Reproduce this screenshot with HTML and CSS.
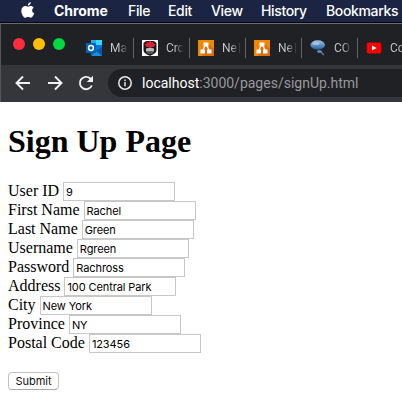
FILE: index.html
```html
<!DOCTYPE html>
<html lang="en">
<head>
<meta charset="utf-8">
<title>Sign Up Page</title>
<link rel="stylesheet" href="styles.css">
</head>
<body>
<nav class="menubar">
  <svg class="apple" viewBox="0 0 14 17"><path d="M9.8 0C10 1.9 8.500 3.600 6.800 3.700 6.600 1.900 8.200.2 9.800 0ZM12.700 5.700C10.500 7.100 10.700 10.200 13.300 11.300 12.600 13.300 11.200 15.700 9.700 15.700 8.700 15.700 8.300 15.100 7.100 15.100 5.900 15.100 5.400 15.700 4.500 15.700 2.600 15.700.3 12 .3 8.900.3 4.700 3.700 3.400 5.400 4.300 6.700 4.900 7.400 4.900 8.600 4.300 10 3.600 11.700 4.200 12.700 5.700Z"/></svg>
  <span class="item app">Chrome</span><span class="item file">File</span><span class="item edit">Edit</span><span class="item view">View</span><span class="item history">History</span><span class="item bookmarks">Bookmarks</span>
</nav>
<div class="tabstrip">
  <div class="lights"><i class="close"></i><i class="minimize"></i><i class="expand"></i></div>
  <div class="tab"><svg viewBox="0 0 16 16"><path fill="#0a68b5" d="M5 0h11v15H5z"/><path fill="#28a8ea" d="M5 0h5v5H5z"/><path fill="#35d6ff" d="M10 0h6v5h-6z"/><path fill="#0078d4" d="M10 5h6v5h-6z"/><path fill="#1490df" d="M5 16 16 7v9z"/><path fill="#0b59a4" d="m10 11 6-4v9z"/><rect y="3" width="10" height="10" rx="1" fill="#0563b8"/><circle cx="5" cy="8" r="2.400" fill="none" stroke="#fff" stroke-width="1.500"/></svg><span>Ma</span></div>
  <div class="tab"><svg viewBox="0 0 16 16"><path fill="#fff" d="M0 0h16v16H0z"/><path fill="#191919" d="M1.500 3 4 1h8l2.500 2v7c0 3-3 4-6.500 6-3.500-2-6.500-3-6.500-6z"/><path fill="#e21f30" d="m8 .5 1.500 2 2-1v2l2 1-2 2.500h-7l-2-2.500 2-1v-2l2 1z"/><path fill="#bbb" d="m4 8.500 4-1 4 1v3H4z"/><path fill="#555" d="M4 12h8l-2 2H6z"/></svg><span>Cro</span></div>
  <div class="tab"><svg viewBox="0 0 16 16"><path fill="#f08705" d="M0 0h16v16H0z"/><path fill="#df6c0c" d="m10 3 6 6v7H5l-2-3z"/><path d="M8 4 4.500 11M8 4l3.500 7" stroke="#fff" stroke-width="1.300"/><path fill="#fff" d="M5.500 2.500h5v4h-5zM2.500 9.500h4.500v4H2.500zM9 9.500h4.500v4H9z"/></svg><span>Ne</span><b></b></div>
  <div class="tab"><svg viewBox="0 0 16 16"><path fill="#f08705" d="M0 0h16v16H0z"/><path fill="#df6c0c" d="m10 3 6 6v7H5l-2-3z"/><path d="M8 4 4.500 11M8 4l3.500 7" stroke="#fff" stroke-width="1.300"/><path fill="#fff" d="M5.500 2.500h5v4h-5zM2.500 9.500h4.500v4H2.500zM9 9.500h4.500v4H9z"/></svg><span>Ne</span><b></b></div>
  <div class="tab"><svg viewBox="0 0 16 16"><defs><linearGradient id="bubble" x2="0" y2="1"><stop stop-color="#9fc6ec"/><stop offset="1" stop-color="#265b9b"/></linearGradient></defs><ellipse cx="7.700" cy="5" rx="7.300" ry="4.700" fill="url(#bubble)"/><ellipse cx="6" cy="3.500" rx="3.500" ry="1.500" fill="#b8d5f1" opacity=".65"/><ellipse cx="9.500" cy="11.500" rx="2.500" ry="1.200" fill="#6497cc"/><path d="m11 12 3 3" stroke="#4c7fb6" stroke-width="1.500"/></svg><span>CO</span></div>
  <div class="tab"><svg viewBox="0 0 16 16"><rect x=".7" y="2.600" width="14.600" height="10.800" rx="2.200" fill="#f00"/><path fill="#fff" d="m6 5.600 4.500 2.400L6 10.400z"/></svg><span>Co</span></div>
</div>
<div class="toolbar">
  <svg class="nav" viewBox="0 0 16 16"><path d="M15 8H2M8 1.500 1.500 8 8 14.500"/></svg>
  <svg class="nav" viewBox="0 0 16 16"><path d="M1 8h13M8 1.500 14.500 8 8 14.500"/></svg>
  <svg class="nav reload" viewBox="0 0 16 16"><path d="M13.800 10.500A6.200 6.200 0 1 1 12.300 3.500L14 5.200"/><path class="tip" d="M15 .8v6.200H8.800z"/></svg>
  <div class="address"><svg class="info" viewBox="0 0 14 14"><circle cx="7" cy="7" r="6.200"/><path d="M7 6v4.300M7 3.400V5"/></svg><span class="url"><em>localhost</em>:3000/pages/signUp.html</span></div>
</div>
<main>
  <h1>Sign Up Page</h1>
  <form>
    <label>User ID <input value="9"></label>
    <label>First Name <input value="Rachel"></label>
    <label>Last Name <input value="Green"></label>
    <label>Username <input value="Rgreen"></label>
    <label>Password <input value="Rachross"></label>
    <label>Address <input value="100 Central Park"></label>
    <label>City <input value="New York"></label>
    <label>Province <input value="NY"></label>
    <label>Postal Code <input value="123456"></label>
    <button type="button">Submit</button>
  </form>
</main>
</body>
</html>
```
FILE: styles.css
```css
* { box-sizing: border-box; }
body { margin: 0; width: 402px; height: 406px; overflow: hidden; background: #fff; color: #000; font-family: Inter, sans-serif; }
svg { display: block; flex: none; }
.menubar { display: flex; align-items: center; height: 23px; padding-left: 21px; background: #1b2443; border-bottom: 1px solid #050507; color: #fff; white-space: nowrap; overflow: hidden; }
.apple { width: 14px; height: 17px; margin: -2px 19px 0 0; fill: #fff; }
.item { flex: none; font-size: 14px; line-height: 22px; letter-spacing: -.35px; font-weight: 500; }
.app { width: 74px; font-weight: 700; letter-spacing: -.05px; }
.file { width: 40px; }
.edit { width: 43px; }
.view { width: 50px; }
.history { width: 65px; }
.tabstrip { display: flex; height: 42px; background: #202124; border-top: 1px solid #6b6c6e; border-left: 1px solid #55565a; overflow: hidden; }
.lights { display: flex; gap: 8px; width: 77px; flex: none; padding: 14px 0 0 12px; }
.lights i { width: 12px; height: 12px; border-radius: 50%; }
.close { background: #ff2d3b; }
.minimize { background: #ffbf00; }
.expand { background: #00da40; }
.tab { display: flex; align-items: center; position: relative; flex: none; width: 56px; height: 20px; margin-top: 14px; padding-left: 8px; border-right: 1px solid #606165; }
.tab svg { width: 16px; height: 16px; margin-right: 8px; }
.tab span { width: 20px; letter-spacing: -.1px; overflow: hidden; white-space: nowrap; font: 12px/18px Roboto, sans-serif; color: transparent; background: linear-gradient(90deg, #c7c8ca 45%, #202124 88%); background-clip: text; -webkit-background-clip: text; }
.tab b { width: 1px; height: 10px; margin-left: -3px; background: #38393c; }
.toolbar { display: flex; align-items: center; height: 37px; padding: 0 0 1px 14px; background: #35363a; border-left: 1px solid #55565a; overflow: hidden; }
.nav { width: 16px; height: 16px; margin-right: 16px; fill: none; stroke: #f0f0f1; stroke-width: 1.900; }
.reload { margin: 0 14px 0 -1px; }
.tip { fill: #f0f0f1; stroke: none; }
.address { display: flex; align-items: center; flex: none; width: 320px; height: 28px; padding-left: 10px; background: #202124; border-radius: 14px 0 0 14px; }
.info { width: 14px; height: 14px; margin-right: 10px; fill: none; stroke: #e8e8e9; stroke-width: 1.500; }
.url { font: 14px/20px Roboto, sans-serif; color: #98999c; white-space: nowrap; }
.url em { font-style: normal; color: #fff; }
main { padding: 0 8px; }
h1 { margin: 21px 0 22px; font: bold 32px/37px "Liberation Serif", serif; }
form { display: flex; flex-direction: column; align-items: flex-start; }
label { display: flex; align-items: flex-start; gap: 4px; height: 19px; font: 16px/17px "Liberation Serif", serif; white-space: nowrap; }
input { width: 112px; height: 19px; padding: 1px 2px 0; border: 1px solid #c8c8c8; border-radius: 0; background: #fff; color: #000; font: 11px/15px Inter, sans-serif; letter-spacing: -.1px; }
button { width: 51px; height: 18px; margin-top: 19px; padding: 0; border: 1px solid #c3c3c3; border-bottom-color: #aaa; border-radius: 4px; background: #fff; color: #111; font: 11px/15px Inter, sans-serif; }
```
